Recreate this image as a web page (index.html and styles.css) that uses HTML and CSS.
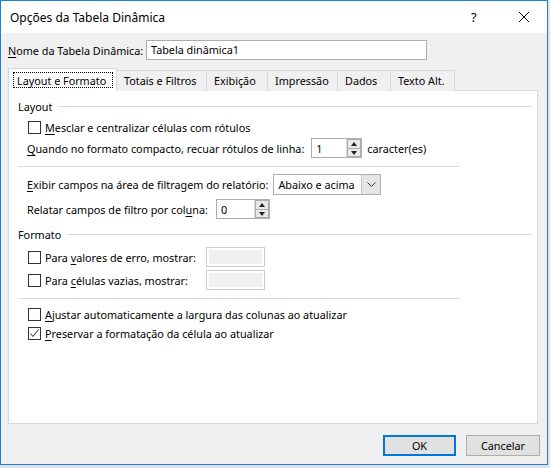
FILE: index.html
```html
<!DOCTYPE html>
<html lang="pt">
<head>
    <meta charset="UTF-8">
    <title>Opções da Tabela Dinâmica</title>
    <link rel="stylesheet" href="styles.css">
</head>
<body>
    <div class="window">
        <!-- barra de título -->
        <div class="titlebar">
            <span class="title">Opções da Tabela Dinâmica</span>
            <span class="help">?</span>
            <span class="close">
                <svg width="12" height="12" viewBox="0 0 12 12"><path d="M1 1L11 11M11 1L1 11" stroke="#000" stroke-width="1" fill="none"/></svg>
            </span>
        </div>

        <div class="content">
            <div class="name_row">
                <label><u>N</u>ome da Tabela Dinâmica:</label>
                <div class="textbox name_box">Tabela dinâmica1</div>
            </div>

            <ul class="tabs">
                <li class="tab current"><span class="focus">Layout e Formato</span></li>
                <li class="tab">Totais e Filtros</li>
                <li class="tab">Exibição</li>
                <li class="tab">Impressão</li>
                <li class="tab">Dados</li>
                <li class="tab">Texto Alt.</li>
            </ul>

            <div class="panel">
                <div class="group">Layout</div>
                <div class="row check_row r1">
                    <span class="checkbox"></span>
                    <span><u>M</u>esclar e centralizar células com rótulos</span>
                </div>
                <div class="row r2">
                    <span class="label"><u>Q</u>uando no formato compacto, recuar rótulos de linha:</span>
                    <div class="spin spin_wide">
                        <span class="value">1</span>
                        <span class="arrows"><i class="up"></i><i class="down"></i></span>
                    </div>
                    <span class="after">caracter(es)</span>
                </div>
                <div class="sep s1"></div>
                <div class="row r3">
                    <span class="label"><u>E</u>xibir campos na área de filtragem do relatório:</span>
                    <div class="select">
                        <span class="value">Abaixo e acima</span>
                        <span class="drop">
                            <svg width="9" height="6" viewBox="0 0 9 6"><path d="M0.5 0.5L4.5 4.5L8.5 0.5" stroke="#333" stroke-width="1" fill="none"/></svg>
                        </span>
                    </div>
                </div>
                <div class="row r4">
                    <span class="label">Relatar campos de filtro por col<u>u</u>na:</span>
                    <div class="spin spin_small">
                        <span class="value">0</span>
                        <span class="arrows"><i class="up"></i><i class="down"></i></span>
                    </div>
                </div>

                <div class="group g2">Formato</div>
                <div class="row check_row r5">
                    <span class="checkbox"></span>
                    <span class="fixed">Para <u>v</u>alores de erro, mostrar:</span>
                    <div class="disabled_box"><span></span></div>
                </div>
                <div class="row check_row r6">
                    <span class="checkbox"></span>
                    <span class="fixed">Para <u>c</u>élulas vazias, mostrar:</span>
                    <div class="disabled_box"><span></span></div>
                </div>
                <div class="sep s2"></div>
                <div class="row check_row r7">
                    <span class="checkbox"></span>
                    <span><u>A</u>justar automaticamente a largura das colunas ao atualizar</span>
                </div>
                <div class="row check_row r8">
                    <span class="checkbox checked">
                        <svg width="11" height="11" viewBox="0 0 11 11"><path d="M1.5 5.5L4 8.5L9.5 1.5" stroke="#222" stroke-width="1" fill="none"/></svg>
                    </span>
                    <span><u>P</u>reservar a formatação da célula ao atualizar</span>
                </div>
            </div>

            <div class="buttons">
                <div class="btn btn_ok">OK</div>
                <div class="btn">Cancelar</div>
            </div>
        </div>
    </div>
</body>
</html>
```

FILE: styles.css
```css
*{
    margin:0;
    padding:0;
    box-sizing: border-box;
}
html,body{
    width:100%;
    height:100vh;
    background: #dfe3e8;
}
body{
    font-family: "Noto Sans", "Open Sans", sans-serif;
    font-size: 10.8px;
    color: #000;
    white-space: nowrap;
}
u{
    text-decoration: underline;
    text-underline-offset: 2px;
}

.window{
    width:548px;
    height:465px;
    border:1px solid #1f7fd4;
    background: #f0f0f0;
    display: flex;
    flex-flow: column nowrap;
}
.titlebar{
    height:32px;
    background: #fff;
    display: flex;
    align-items: center;
    padding-left: 9px;
}
.title{
    font-size: 12px;
    flex: 1;
}
.help{
    font-size: 13px;
    width: 20px;
    margin-right: 27px;
}
.close{
    display: flex;
    width: 12px;
    margin-right: 17px;
}

.content{
    padding: 0 9px 0 7px;
    display: flex;
    flex-flow: column nowrap;
}
.name_row{
    display: flex;
    align-items: center;
    margin-top: 7px;
    height: 20px;
}
.name_row label{
    width: 138px;
}
.textbox{
    height: 20px;
    border: 1px solid #adadad;
    background: #fff;
    padding-left: 4px;
    line-height: 17px;
}
.name_box{
    width: 281px;
}

/* abas */
.tabs{
    list-style: none;
    display: flex;
    height: 23px;
    margin-top: 8px;
    position: relative;
    z-index: 1;
}
.tab{
    height: 21px;
    margin-top: 2px;
    border: 1px solid #d9d9d9;
    border-bottom: none;
    border-left: none;
    padding: 0 7px;
    line-height: 20px;
    background: #f0f0f0;
}
.tab:nth-child(2){ width: 90px; }
.tab:nth-child(3){ width: 61px; }
.tab:nth-child(4){ width: 70px; }
.tab:nth-child(5){ width: 53px; }
.tab:nth-child(6){ width: 64px; }
.tab.current{
    width: 109px;
    height: 23px;
    margin-top: 0;
    border-left: 1px solid #d9d9d9;
    background: #fff;
    padding: 3px 3px 0 4px;
    line-height: 15px;
}
.focus{
    display: block;
    border: 1px dotted #000;
    padding-left: 3px;
    height: 16px;
}

.panel{
    width: 530px;
    height: 334px;
    margin-top: -1px;
    background: #fff;
    border: 1px solid #d9d9d9;
    padding: 7px 0 0 9px;
    display: flex;
    flex-flow: column nowrap;
}
.group{
    height: 16px;
    display: flex;
    align-items: center;
}
.group::after{
    content: "";
    flex: 1;
    height: 1px;
    background: #dcdcdc;
    margin: 0 6px 0 6px;
}
.g2{ margin-top: 7px; }
.sep{
    width: 441px;
    height: 1px;
    background: #dcdcdc;
    margin-top: 8px;
}
.row{
    display: flex;
    align-items: center;
    padding-left: 9px;
}
.check_row{
    height: 18px;
    padding-left: 10px;
}
.r1{ margin-top: 4px; }
.r2{ height: 20px; margin-top: 2px; }
.r3{ height: 21px; margin-top: 7px; }
.r4{ height: 20px; margin-top: 4px; }
.r5{ height: 20px; margin-top: 5px; }
.r6{ height: 20px; margin-top: 3px; }
.r7{ margin-top: 6px; }
.r8{ margin-top: 1px; }

.checkbox{
    width: 13px;
    height: 13px;
    border: 1px solid #333;
    background: #fff;
    margin-right: 4px;
    display: flex;
    align-items: center;
    justify-content: center;
}
.label{
    margin-right: 3px;
}
.r2 .label{ margin-right: 7px; }
.r3 .label{ margin-right: 5px; }
.r4 .label{ margin-right: 8px; }
.after{
    margin-left: 5px;
}
.fixed{
    width: 161px;
}

/* campos de rotação */
.spin{
    height: 20px;
    border: 1px solid #adadad;
    background: #fff;
    display: flex;
    align-items: center;
}
.spin .value{
    flex: 1;
    padding-left: 4px;
}
.spin_wide{ width: 51px; }
.spin_small{ width: 54px; }
.arrows{
    width: 15px;
    height: 18px;
    display: flex;
    flex-flow: column nowrap;
    border-left: 1px solid #d9d9d9;
}
.arrows i{
    flex: 1;
    background: #e8e8e8;
    border: 1px solid #adadad;
    position: relative;
}
.arrows i + i{ border-top: none; }
.arrows i::after{
    content: "";
    position: absolute;
    left: 3px;
    border-left: 3.5px solid transparent;
    border-right: 3.5px solid transparent;
}
.arrows .up::after{
    top: 2px;
    border-bottom: 4px solid #222;
}
.arrows .down::after{
    top: 2px;
    border-top: 4px solid #222;
}

.select{
    width: 108px;
    height: 21px;
    border: 1px solid #adadad;
    background: #fff;
    display: flex;
    align-items: center;
}
.select .value{
    flex: 1;
    padding-left: 4px;
}
.drop{
    width: 19px;
    height: 19px;
    background: #e5e5e5;
    border-left: 1px solid #c4c4c4;
    display: flex;
    align-items: center;
    justify-content: center;
}

.disabled_box{
    width: 59px;
    height: 20px;
    border: 1px solid #cccccc;
    background: #fff;
    padding: 2px;
}
.disabled_box span{
    display: block;
    height: 100%;
    background: #f0f0f0;
}

.buttons{
    display: flex;
    justify-content: flex-end;
    margin-top: 11px;
    margin-right: -2px;
}
.btn{
    width: 74px;
    height: 21px;
    border: 1px solid #adadad;
    background: #e1e1e1;
    text-align: center;
    line-height: 19px;
}
.btn_ok{
    width: 73px;
    border: 2px solid #0078d7;
    line-height: 17px;
    margin-right: 10px;
}
```
